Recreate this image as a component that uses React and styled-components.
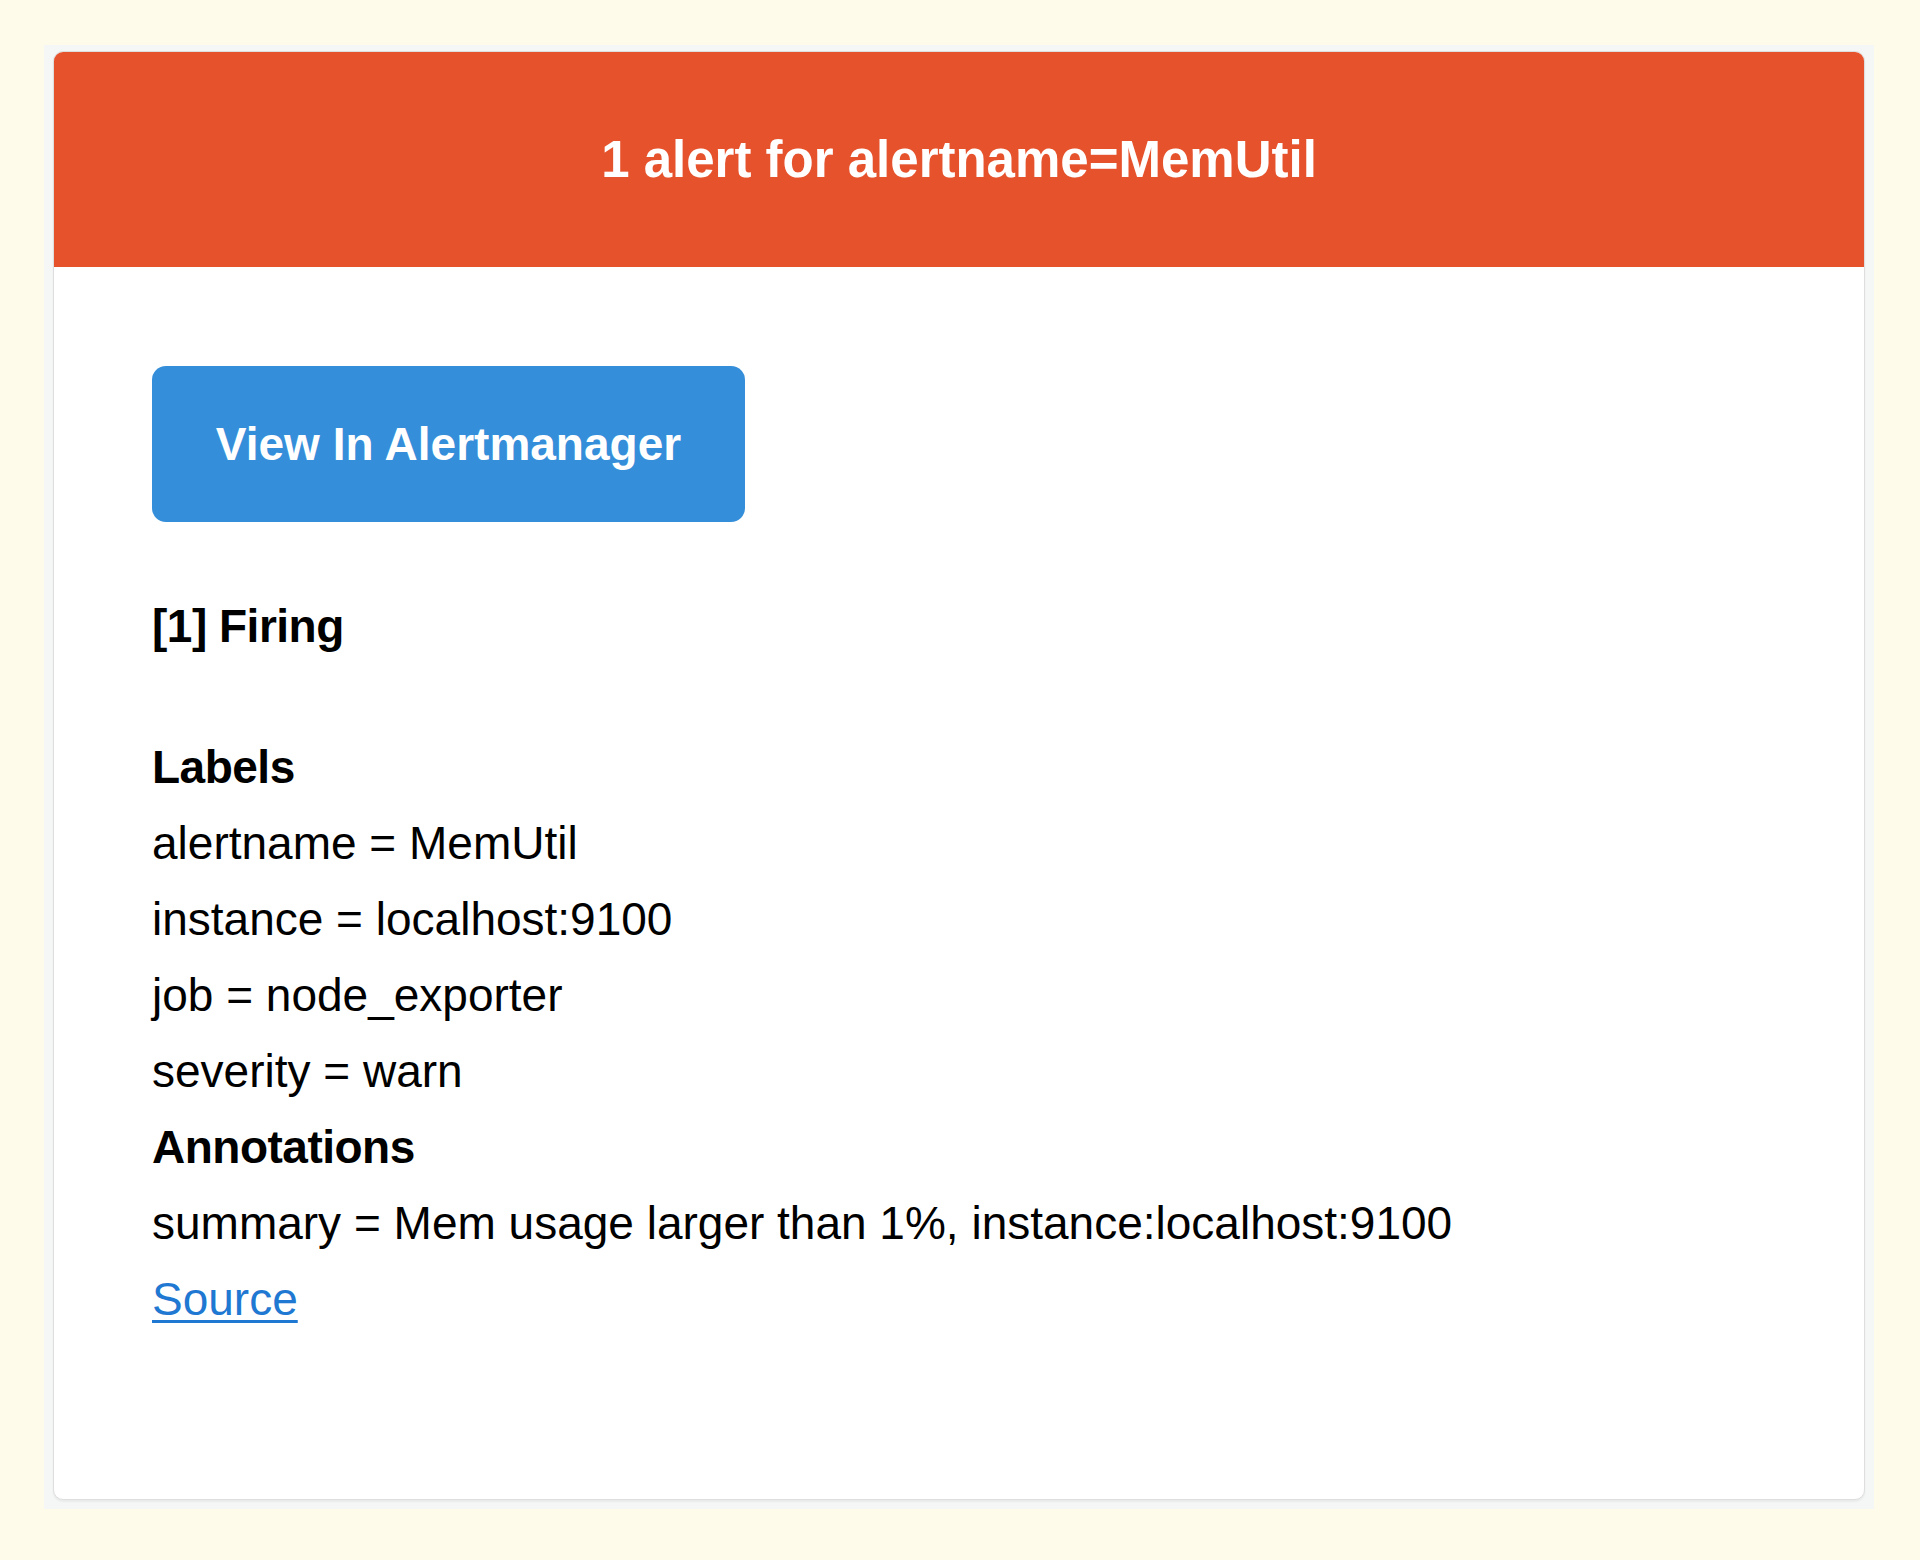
import React from "react";
import styled, { createGlobalStyle } from "styled-components";

const GlobalStyle = createGlobalStyle`
    html, body {
        margin: 0;
        padding: 0;
        background: #fefbea;
    }

    body {
        font-family: "Liberation Sans", Arial, Helvetica, sans-serif;
        color: #000;
    }
`;

const Page = styled.div`
    box-sizing: border-box;
    width: 1920px;
    height: 1560px;
    padding: 45px 46px 51px 44px;
    background: #fefbea;
`;

const Body = styled.div`
    box-sizing: border-box;
    height: 100%;
    padding: 6px 9px 9px 9px;
    background: #f5f6f6;
`;

const Card = styled.div`
    box-sizing: border-box;
    height: 100%;
    background: #fff;
    border: 1px solid #dedede;
    border-radius: 10px;
    box-shadow: 0 2px 2px rgba(0, 0, 0, 0.05);
    overflow: hidden;
`;

const Header = styled.div`
    display: flex;
    align-items: center;
    justify-content: center;
    height: 215px;
    background: #e6522c;
    color: #fff;
    font-size: 51px;
    font-weight: bold;
`;

const Content = styled.div`
    padding: 99px 98px 98px 98px;
    font-size: 46px;
    line-height: 76px;
`;

const Block = styled.div`
    padding-bottom: ${props => props.gap || 0}px;
`;

const Button = styled.a`
    display: inline-flex;
    align-items: center;
    justify-content: center;
    box-sizing: border-box;
    width: 593px;
    height: 156px;
    background: #348eda;
    border-radius: 14px;
    color: #fff;
    font-weight: bold;
    font-size: 46px;
    text-decoration: none;
    vertical-align: top;
`;

const Heading = styled.div`
    font-weight: bold;
    letter-spacing: -0.5px;
`;

const Line = styled.div``;

const SourceLink = styled.a`
    color: #1f78d1;
    text-decoration: underline;
    text-underline-offset: 5px;
    text-decoration-thickness: 3px;
`;

const labels = [
    ["alertname", "MemUtil"],
    ["instance", "localhost:9100"],
    ["job", "node_exporter"],
    ["severity", "warn"]
];

const annotations = [
    ["summary", "Mem usage larger than 1%, instance:localhost:9100"]
];

export default function App() {
    return (
        <Page>
            <GlobalStyle />
            <Body>
                <Card>
                    <Header>1 alert for alertname=MemUtil</Header>
                    <Content>
                        <Block gap={66}>
                            <Button href="#">View In Alertmanager</Button>
                        </Block>
                        <Block gap={65}>
                            <Heading>[1] Firing</Heading>
                        </Block>
                        <Block>
                            <Heading>Labels</Heading>
                            {labels.map(([key, value]) => (
                                <Line key={key}>
                                    {key} = {value}
                                </Line>
                            ))}
                            <Heading>Annotations</Heading>
                            {annotations.map(([key, value]) => (
                                <Line key={key}>
                                    {key} = {value}
                                </Line>
                            ))}
                            <Line>
                                <SourceLink href="#">Source</SourceLink>
                            </Line>
                        </Block>
                    </Content>
                </Card>
            </Body>
        </Page>
    );
}
